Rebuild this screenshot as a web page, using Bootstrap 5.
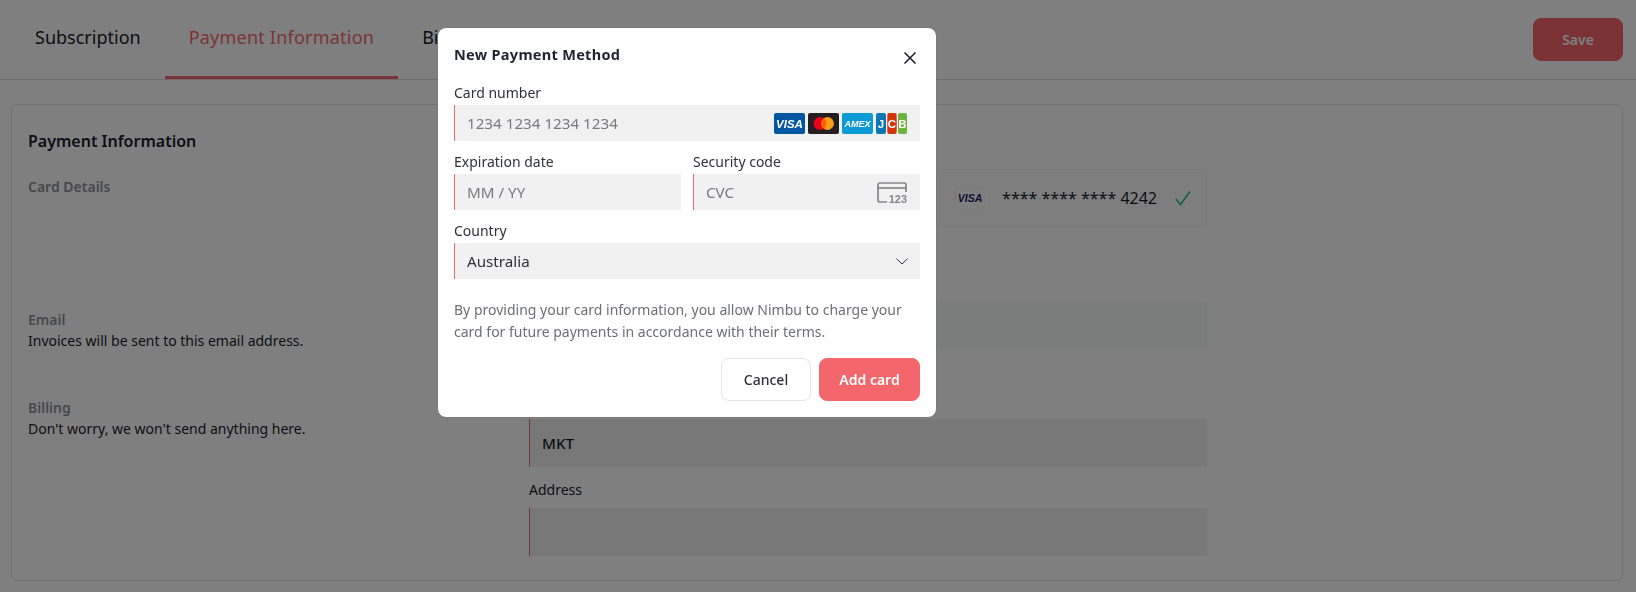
<!DOCTYPE html>
<html lang="en">
<head>
<meta charset="utf-8">
<title>Payment Information</title>
<link rel="stylesheet" href="https://cdn.jsdelivr.net/npm/bootstrap@5.3.0/dist/css/bootstrap.min.css">
<style>
  html, body { height: 592px; overflow: hidden; }
  body { font-family: "Noto Sans", "Open Sans", sans-serif; font-size: 14px; line-height: 21px; color: #171c2b; background: #fff; }

  .page-head { height: 80px; border-bottom: 1px solid #d9d9d9; padding-left: 11px; padding-right: 13px; }
  .page-tabs .nav-link { height: 79px; padding: 0 24px; font-size: 18px; line-height: 75px; color: #171c2b; border-bottom: 3px solid transparent; }
  .page-tabs .nav-link.active { color: #f4686c; border-bottom-color: #f1676c; letter-spacing: .22px; }
  .save-btn { width: 90px; height: 43px; margin-top: 18px; background: #f4656a; border: 1px solid #f4656a; border-radius: 8px; color: #fff; font-size: 14px; font-weight: 600; padding: 0; opacity: 1; }

  .page-panel { margin: 24px 13px 0 11px; padding: 24px 15px 24px 16px; height: 477px; border: 1px solid #e3e3e3; border-radius: 6px; }
  .panel-title { font-size: 16px; line-height: 24px; font-weight: 600; margin-bottom: 16px; }
  .panel-side { width: 501px; flex: none; padding-top: 7px; }
  .panel-main { width: 678px; flex: none; }
  .side-title { font-weight: 600; color: #8f9099; }
  .sec-card { height: 133px; }
  .sec-email { height: 88px; }
  .saved-card { height: 58px; background: #fcfcfc; border: 1px solid #f4f4f4; border-radius: 4px; padding-right: 15px; font-size: 16px; }
  .saved-logo { width: 30px; height: 21px; margin-right: 17px; background: #fff; border: 1px solid #f4f4f4; border-radius: 3px; color: #1a1f71; font: italic 700 10.5px/19px "Liberation Sans", sans-serif; text-align: center; }
  .saved-check { margin-left: 18px; }
  .bg-label { line-height: 21px; margin-bottom: 8px; }
  .bg-gap { margin-top: 12px; }
  .bg-field { height: 48px; width: 678px; background: #f0f0f0; border: 0; border-left: 1px solid #e4686c; border-radius: 0; padding: 0 12px; font-size: 15.2px; font-weight: 500; color: #171c2b; }
  .bg-field.autofilled { background: #f4faf6; }

  .pay-dialog { width: 498px; max-width: none; margin: 28px 0 0 438px; }
  .pay-content { border: 0; border-radius: 8px; padding: 16px; color: #30313d; box-shadow: 0 0 1px rgba(0,0,0,.4); }
  .pay-title { font-size: 14.5px; line-height: 20px; font-weight: 700; letter-spacing: .3px; color: #1f2430; margin: 0; }
  .pay-close { width: 14px; height: 14px; padding: 0; margin: 7px 3px 0 0; border: 0; line-height: 0; }
  .pay-head { margin-bottom: 16px; height: 22px; }
  .pay-label { display: block; line-height: 21px; margin: 0 0 2px; font-size: 14px; }
  .pay-row { margin-bottom: 10px; }
  .pay-split { gap: 12px; }
  .pay-field, .pay-field:focus { height: 36px; background-color: #f1f1f1; border: 0; border-left: 1px solid #f4686c; border-radius: 0; padding: 0 12px; font-size: 15.2px; line-height: 36px; color: #30313d; box-shadow: none; }
  .pay-field::placeholder { color: #787982; opacity: 1; }
  .form-select.pay-field { background-image: url("data:image/svg+xml,%3csvg xmlns='http://www.w3.org/2000/svg' viewBox='0 0 12 7'%3e%3cpath fill='none' stroke='%2330313d' stroke-width='1' d='M.5.7 6 6 11.5.7'/%3e%3c/svg%3e"); background-position: right 12px center; background-size: 12px 7px; }
  .pay-logos { top: 8px; right: 13px; gap: 3px; }
  .pay-cvc { top: 8px; right: 13px; }
  .pay-logo { display: block; width: 31px; height: 21px; }
  .pay-terms { margin: 20px 0 15px; line-height: 22px; color: #6d6e78; }
  .pay-cancel { width: 90px; height: 43px; padding: 0; background: #fff; border: 1px solid #e6e6e6; border-radius: 8px; color: #30313d; font-size: 14px; font-weight: 500; }
  .pay-add { width: 101px; height: 43px; padding: 0; background: #f3676c; border: 1px solid #f3676c; border-radius: 8px; color: #fff; font-size: 14px; font-weight: 600; }
  .logo-txt { font-family: "Liberation Sans", sans-serif; font-weight: 700; fill: #fff; }
  .col-grey { font-family: "Liberation Sans", sans-serif; font-weight: 700; fill: #85858c; }
</style>
</head>
<body>

<header class="page-head d-flex justify-content-between align-items-start">
  <ul class="nav page-tabs flex-nowrap">
    <li class="nav-item"><a class="nav-link" href="#">Subscription</a></li>
    <li class="nav-item"><a class="nav-link active" href="#">Payment Information</a></li>
    <li class="nav-item"><a class="nav-link" href="#">Billing</a></li>
  </ul>
  <button type="button" class="btn save-btn">Save</button>
</header>

<main class="page-panel">
  <h2 class="panel-title">Payment Information</h2>

  <section class="d-flex sec-card">
    <div class="panel-side"><div class="side-title">Card Details</div></div>
    <div class="panel-main">
      <div class="saved-card d-flex align-items-center justify-content-end">
        <span class="saved-logo">VISA</span>
        <span>**** **** **** 4242</span>
        <svg class="saved-check" width="16" height="16" viewBox="0 0 16 16" fill="none" stroke="#1fbf85" stroke-width="1.5"><path d="M1 9l4.5 5.5L15 1.5"/></svg>
      </div>
    </div>
  </section>

  <section class="d-flex sec-email">
    <div class="panel-side">
      <div class="side-title">Email</div>
      <div>Invoices will be sent to this email address.</div>
    </div>
    <div class="panel-main"><input class="form-control bg-field autofilled" type="email" aria-label="Email"></div>
  </section>

  <section class="d-flex">
    <div class="panel-side">
      <div class="side-title">Billing</div>
      <div>Don't worry, we won't send anything here.</div>
    </div>
    <div class="panel-main">
      <div class="bg-label">Name</div>
      <input class="form-control bg-field" type="text" value="MKT" aria-label="Name">
      <div class="bg-label bg-gap">Address</div>
      <input class="form-control bg-field" type="text" aria-label="Address">
    </div>
  </section>
</main>

<div class="modal-backdrop show"></div>

<div class="modal d-block" tabindex="-1">
  <div class="modal-dialog pay-dialog">
    <div class="modal-content pay-content">
      <div class="pay-head d-flex justify-content-between align-items-start">
        <h5 class="pay-title">New Payment Method</h5>
        <button type="button" class="btn pay-close" aria-label="Close"><svg width="14" height="14" viewBox="0 0 14 14" fill="none" stroke="#171c2b" stroke-width="1.5"><path d="M1.5 1.5l11 11M12.5 1.5l-11 11"/></svg></button>
      </div>

      <div class="pay-row">
        <label class="pay-label" for="cardno">Card number</label>
        <div class="position-relative">
          <input id="cardno" class="form-control pay-field" placeholder="1234 1234 1234 1234">
          <div class="pay-logos position-absolute d-flex">
            <svg class="pay-logo" viewBox="0 0 31 21"><rect width="31" height="21" rx="2" fill="#00579f"/><text class="logo-txt" x="15.5" y="15" font-size="11.5" font-style="italic" text-anchor="middle">VISA</text></svg>
            <svg class="pay-logo" viewBox="0 0 31 21"><rect width="31" height="21" rx="2" fill="#231f20"/><circle cx="12" cy="10.5" r="6.4" fill="#eb001b"/><circle cx="19.5" cy="10.5" r="6.4" fill="#f79e1b"/><path d="M15.75 5.3a6.4 6.4 0 0 1 0 10.4a6.4 6.4 0 0 1 0-10.4z" fill="#ff5f00"/></svg>
            <svg class="pay-logo" viewBox="0 0 31 21"><rect width="31" height="21" rx="2" fill="#0d9bd6"/><text x="15.5" y="13.8" font-family="Liberation Sans, sans-serif" font-size="9" font-style="italic" font-weight="700" fill="#fff" text-anchor="middle">AMEX</text></svg>
            <svg class="pay-logo" viewBox="0 0 31 21"><rect width="10" height="21" rx="2" fill="#0b76b3"/><rect x="11.3" width="9.4" height="21" rx="2" fill="#d5330a"/><rect x="22" width="9" height="21" rx="2" fill="#6cb33f"/><text class="logo-txt" x="5" y="15" font-size="11.5" text-anchor="middle">J</text><text class="logo-txt" x="16" y="15" font-size="11.5" text-anchor="middle">C</text><text class="logo-txt" x="26.5" y="15" font-size="11.5" text-anchor="middle">B</text></svg>
          </div>
        </div>
      </div>

      <div class="d-flex pay-row pay-split">
        <div class="flex-fill w-50">
          <label class="pay-label" for="expiry">Expiration date</label>
          <input id="expiry" class="form-control pay-field" placeholder="MM / YY">
        </div>
        <div class="flex-fill w-50">
          <label class="pay-label" for="cvc">Security code</label>
          <div class="position-relative">
            <input id="cvc" class="form-control pay-field" placeholder="CVC">
            <svg class="pay-cvc position-absolute" width="30" height="21" viewBox="0 0 30 21" fill="none" stroke="#85858c" stroke-width="1.7"><path d="M10 20H3a2 2 0 0 1-2-2V3a2 2 0 0 1 2-2h24a2 2 0 0 1 2 2v7"/><path d="M1 6h28"/><text class="col-grey" x="30" y="20.5" font-size="11" text-anchor="end" stroke="none">123</text></svg>
          </div>
        </div>
      </div>

      <div>
        <label class="pay-label" for="country">Country</label>
        <select id="country" class="form-select pay-field"><option>Australia</option></select>
      </div>

      <p class="pay-terms">By providing your card information, you allow Nimbu to charge your card for future payments in accordance with their terms.</p>

      <div class="d-flex justify-content-end gap-2">
        <button type="button" class="btn pay-cancel">Cancel</button>
        <button type="button" class="btn pay-add">Add card</button>
      </div>
    </div>
  </div>
</div>

<script src="https://cdn.jsdelivr.net/npm/bootstrap@5.3.0/dist/js/bootstrap.bundle.min.js"></script>
</body>
</html>
